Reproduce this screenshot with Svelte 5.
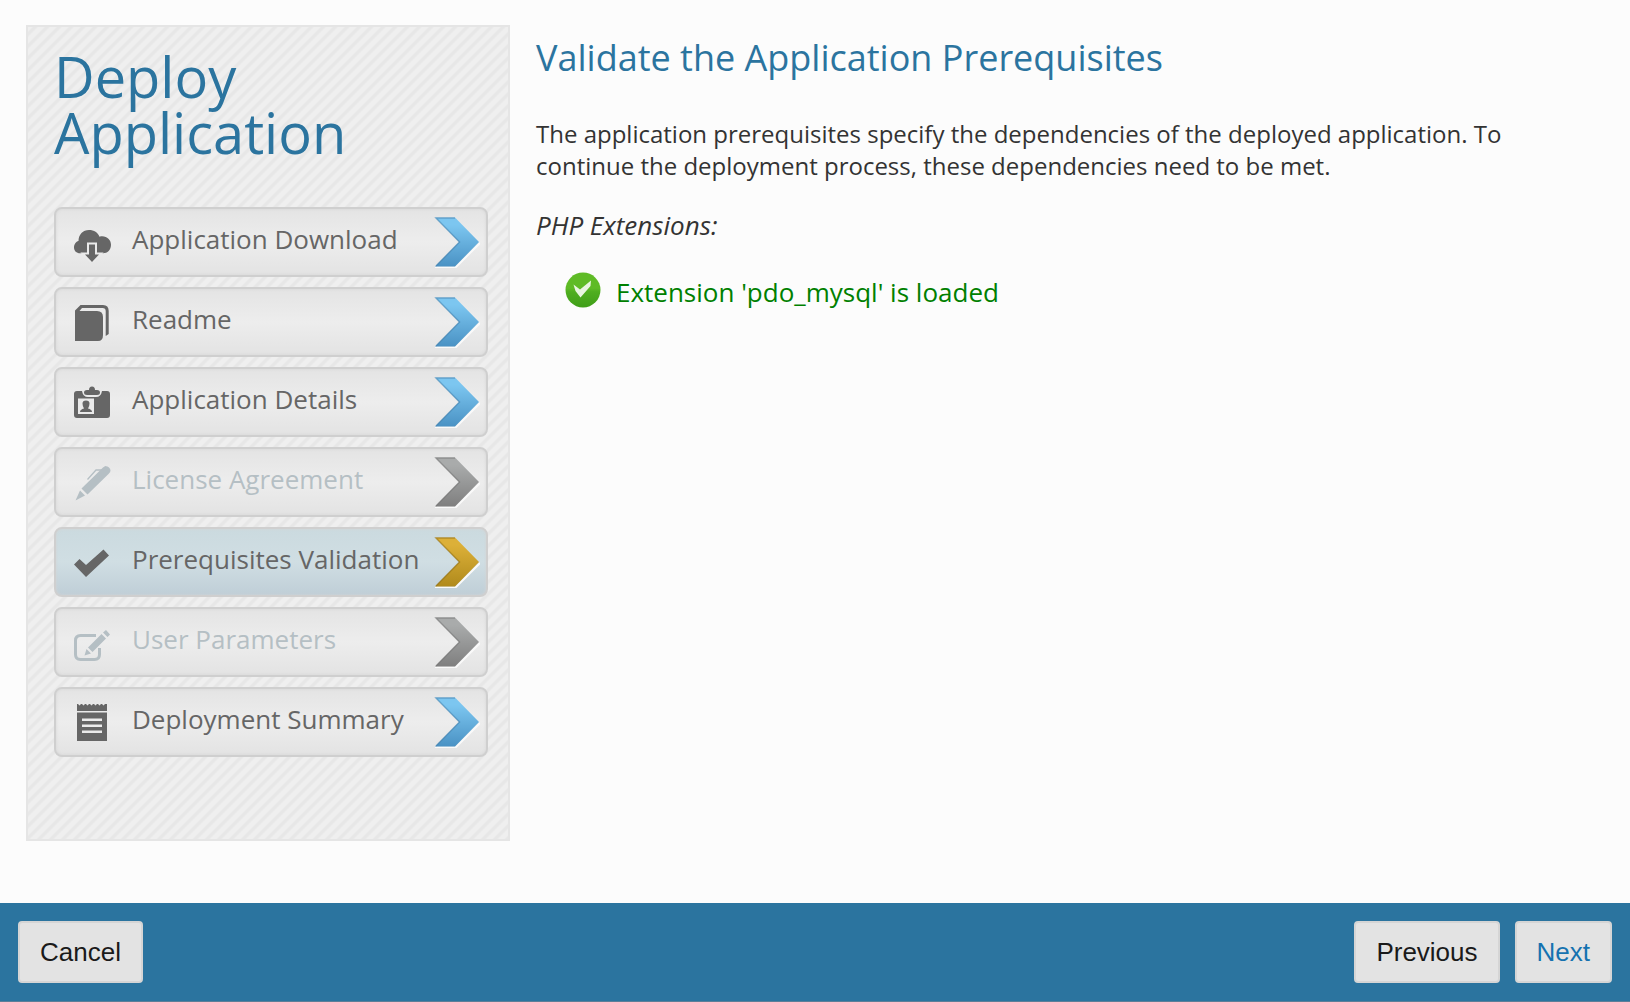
<script>
  const steps = [
    { label: 'Application Download', icon: 'cloud', tone: 'blue' },
    { label: 'Readme', icon: 'book', tone: 'blue' },
    { label: 'Application Details', icon: 'badge', tone: 'blue' },
    { label: 'License Agreement', icon: 'pen', tone: 'grey' },
    { label: 'Prerequisites Validation', icon: 'check', tone: 'gold' },
    { label: 'User Parameters', icon: 'edit', tone: 'grey' },
    { label: 'Deployment Summary', icon: 'notes', tone: 'blue' }
  ];
  const tones = {
    blue: ['#7cc6f0', '#4a92c4', '#3f7ca8'],
    grey: ['#a9abab', '#7f7f7f', '#707070'],
    gold: ['#dcb038', '#b08a1c', '#8a6a14']
  };
</script>

<div class="page">
  <div class="content">
    <aside>
      <h1>Deploy Application</h1>
      <nav aria-label="Deployment steps">
        {#each steps as step}
          <button
            type="button"
            class="step"
            class:current={step.tone === 'gold'}
            disabled={step.tone === 'grey'}
            aria-current={step.tone === 'gold' ? 'step' : undefined}
          >
            <svg class="icon" viewBox="0 0 40 40" aria-hidden="true">
              {#if step.icon === 'cloud'}
                <path fill="currentColor" d="M8 31.300C4.500 31.300 2 28.800 2 25.500C2 22.300 4 19.500 6.500 19C6.500 12.500 11 8 17 8C22 8 26 10.500 27.500 14.700C33.500 13 39 17 39 22.800C39 27.800 35.500 31.300 31 31.300Z" />
                <path class="knock" fill="currentColor" stroke-width="4" paint-order="stroke" d="M17 22.500H23V32.500H27L20 40L13 32.500H17Z" />
              {:else if step.icon === 'book'}
                <path fill="currentColor" d="M3 39V8.500L8.500 3H31Q36.700 3 36.700 9V32L33.700 34V9Q33.700 6 30.500 6H10L7.500 9H25Q31 9 31 15V33Q31 39 26 39Z" />
              {:else if step.icon === 'badge'}
                <path fill="currentColor" d="M5 9H10Q11 15 16 15H24Q29 15 30 9H35Q38 9 38 12V33Q38 36 35 36H5Q2 36 2 33V12Q2 9 5 9Z" />
                <path fill="currentColor" d="M15 8H17Q17 4.500 20 4.500Q23 4.500 23 8H25Q28 8 28 10.500Q28 13 25 13H15Q12 13 12 10.500Q12 8 15 8Z" />
                <path class="gap" fill-rule="evenodd" d="M6 16.500H22V32H6ZM8 30H20Q20 27.500 16 26.500Q17.500 24 17.500 21.500Q17.500 18.500 14 18.500Q10.500 18.500 10.500 21.500Q10.500 24 12 26.500Q8 27.500 8 30Z" />
              {:else if step.icon === 'pen'}
                <path fill="currentColor" d="M3.500 38.500L8 28.500L13 33.500ZM9.500 26.500L31 5.500Q34 3 37 5.500Q40 8.500 37 11.500L15.500 32.500Z" />
                <path fill="none" stroke="currentColor" stroke-width="1.300" d="M15.500 17.500L24 8H31M31 8L34 4.500" />
              {:else if step.icon === 'check'}
                <path fill="currentColor" d="M2 22.500L7.500 17L14 23L31.500 7.500L37 13.500L14 35Z" />
              {:else if step.icon === 'edit'}
                <path fill="none" stroke="currentColor" stroke-width="3" d="M24 13.500H8.500Q3.500 13.500 3.500 18.500V32.500Q3.500 37.500 8.500 37.500H22.500Q27.500 37.500 27.500 32.500V26" />
                <path fill="currentColor" d="M12.500 33.500L14.500 27L19 31.500ZM16 25.500L29.500 12L34 16.500L20.500 30ZM31 10.500L34 8L38 12.500L35.500 15Z" />
              {:else}
                <path fill="currentColor" d="M5 2H6L7.500 3.500L9 2H10L11.500 3.500L13 2H14L15.500 3.500L17 2H18L19.500 3.500L21 2H22L23.500 3.500L25 2H26L27.500 3.500L29 2H30L31.500 3.500L33 2H35V9H5Z" />
                <path fill="currentColor" fill-rule="evenodd" d="M5 10.500H35V39H5ZM10 16.500V19H30V16.500ZM10 22.500V25H30V22.500ZM10 28.500V31H30V28.500Z" />
              {/if}
            </svg>
            <span>{step.label}</span>
            <svg class="arrow" viewBox="0 0 46 52" aria-hidden="true">
              <defs>
                <linearGradient id={'fill-' + step.icon} x1="0" y1="0" x2="0" y2="1">
                  <stop offset="0.150" stop-color={tones[step.tone][0]} />
                  <stop offset="1" stop-color={tones[step.tone][1]} />
                </linearGradient>
              </defs>
              <path fill="none" stroke="#fafafa" stroke-width="2" d="M1 51.500H21.500L46 27" />
              <path fill={'url(#fill-' + step.icon + ')'} d="M1 1.500H21L45 26L21 50.500H1L25 26Z" />
              <path fill="none" stroke={tones[step.tone][2]} stroke-width="1.500" opacity="0.500" d="M21 2H2L25.500 26L2 50" />
            </svg>
          </button>
        {/each}
      </nav>
    </aside>

    <main>
      <h2>Validate the Application Prerequisites</h2>
      <p>
        The application prerequisites specify the dependencies of the deployed application. To
        continue the deployment process, these dependencies need to be met.
      </p>
      <h3>PHP Extensions:</h3>
      <ul>
        <li>
          <svg class="ok" viewBox="0 0 36 36" aria-hidden="true">
            <defs>
              <linearGradient id="ok-fill" x1="0" y1="0" x2="0" y2="1">
                <stop offset="0.450" stop-color="#5fbb26" />
                <stop offset="0.550" stop-color="#4fae20" />
                <stop offset="1" stop-color="#3f9e18" />
              </linearGradient>
            </defs>
            <circle cx="18" cy="18" r="17.500" fill="url(#ok-fill)" />
            <path fill="#e9f5e1" d="M8.500 12.500L15 17.500L26 8.500L25.500 14L15.500 25.500L10.500 19Z" />
          </svg>
          <span>Extension 'pdo_mysql' is loaded</span>
        </li>
      </ul>
    </main>
  </div>

  <footer>
    <button type="button">Cancel</button>
    <div class="forward">
      <button type="button">Previous</button>
      <button type="button" class="next">Next</button>
    </div>
  </footer>
</div>

<style>
  :global(body) {
    margin: 0;
    background: #fcfcfc;
  }
  .page {
    min-height: 100vh;
    display: flex;
    flex-direction: column;
    box-sizing: border-box;
    font-family: 'Open Sans', 'Noto Sans', sans-serif;
    color: #333;
  }
  .content {
    flex: 1;
    display: flex;
    align-items: flex-start;
    gap: 26px;
    padding: 25px 26px;
  }
  aside {
    flex: none;
    width: 484px;
    box-sizing: border-box;
    padding: 21px 20px 82px 26px;
    border: 2px solid #e5e5e5;
    background: linear-gradient(
        135deg,
        #efefef 0 15%,
        #e7e7e7 25% 35%,
        #efefef 45% 65%,
        #e7e7e7 75% 85%,
        #efefef 95%
      )
      0 0 / 12px 12px;
  }
  h1 {
    margin: 0 0 47px;
    font-size: 56px;
    line-height: 56px;
    font-weight: 400;
    color: #2b749f;
  }
  nav {
    display: flex;
    flex-direction: column;
    gap: 10px;
  }
  .step {
    display: flex;
    align-items: center;
    height: 70px;
    padding: 0 6px 0 16px;
    border: 2px solid #cfcfcf;
    border-radius: 8px;
    background: linear-gradient(#e4e4e4, #ededed 50%, #e3e3e3);
    box-shadow: inset 0 0 3px #d4d4d4;
    font: 400 26px/36px 'Open Sans', 'Noto Sans', sans-serif;
    color: #666;
    text-align: left;
  }
  .step:disabled {
    color: #b5bfc4;
  }
  .step.current {
    background: linear-gradient(#cbdadf, #d0dee3 50%, #bfced7);
  }
  .step span {
    flex: 1;
    padding: 0 0 6px 20px;
    white-space: nowrap;
  }
  .icon {
    flex: none;
    width: 40px;
    height: 40px;
  }
  .knock {
    stroke: #eaeaea;
  }
  .gap {
    fill: #eaeaea;
  }
  .arrow {
    flex: none;
    width: 46px;
    height: 52px;
  }
  main {
    flex: 1;
    min-width: 0;
    padding: 8px 60px 0 0;
  }
  h2 {
    margin: 0 0 35px;
    font-size: 36px;
    line-height: 50px;
    font-weight: 400;
    color: #2b749f;
  }
  p {
    margin: 0 0 26px;
    font-size: 24px;
    line-height: 32px;
  }
  h3 {
    margin: 0 0 30px;
    font-size: 26px;
    line-height: 34px;
    font-weight: 400;
    font-style: italic;
  }
  ul {
    margin: 0;
    padding: 0 0 0 29px;
    list-style: none;
  }
  li {
    display: flex;
    gap: 15px;
    font-size: 26px;
    line-height: 40px;
    color: #008000;
  }
  .ok {
    flex: none;
    width: 36px;
    height: 36px;
  }
  footer {
    display: flex;
    justify-content: space-between;
    padding: 18px;
    background: #2b749f;
    border-bottom: 1px solid #5c7f99;
  }
  .forward {
    display: flex;
    gap: 15px;
  }
  footer button {
    height: 62px;
    padding: 0 20px;
    border: 2px solid #d5d5d5;
    border-radius: 4px;
    background: #e3e3e3;
    font: 26px 'Liberation Sans', Arial, sans-serif;
    color: #1a1a1a;
  }
  footer .next {
    color: #1572b0;
  }
</style>
